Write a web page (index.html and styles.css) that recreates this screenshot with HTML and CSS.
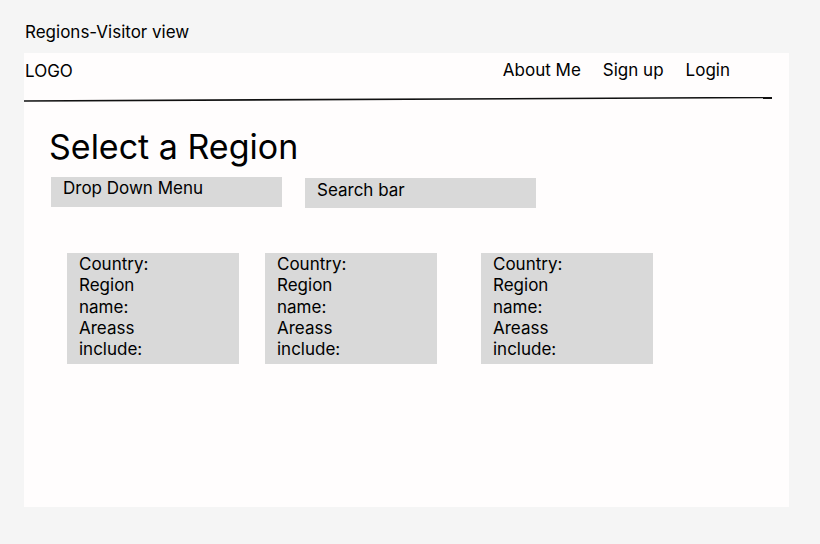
FILE: index.html
```html
<!DOCTYPE html>
<html>
<head>
<meta charset="utf-8">
<link rel="stylesheet" href="styles.css">
</head>
<body>
<div class="page-title">Regions-Visitor view</div>
<div class="frame">
  <header class="header">
    <div class="logo">LOGO</div>
    <nav class="nav">
      <span>About Me</span>
      <span>Sign up</span>
      <span>Login</span>
    </nav>
  </header>
  <svg class="rule" width="748" height="5" viewBox="0 0 748 5"><line x1="0" y1="4" x2="748" y2="0.5" stroke="#111" stroke-width="1.6"/></svg>
  <h1 class="heading">Select a Region</h1>
  <div class="controls">
    <div class="field dropdown">Drop Down Menu</div>
    <div class="field search">Search bar</div>
  </div>
  <div class="cards">
    <div class="card c1">Country:<br>Region<br>name:<br>Areass<br>include:</div>
    <div class="card c2">Country:<br>Region<br>name:<br>Areass<br>include:</div>
    <div class="card c3">Country:<br>Region<br>name:<br>Areass<br>include:</div>
  </div>
</div>
</body>
</html>
```
FILE: styles.css
```css
html, body {
  margin: 0;
  padding: 0;
}
body {
  background: #f5f5f5;
  font-family: Inter, "Liberation Sans", sans-serif;
  color: #000;
  width: 820px;
  height: 544px;
  overflow: hidden;
}
.page-title {
  font-size: 17px;
  line-height: 20px;
  padding: 22px 0 0 25px;
  height: 31px;
}
.frame {
  margin-left: 24px;
  width: 765px;
  height: 454px;
  background: #fffdfd;
}
.header {
  display: flex;
  justify-content: space-between;
  height: 44px;
}
.logo {
  font-size: 17px;
  line-height: 20px;
  padding: 8px 0 0 1px;
}
.nav {
  display: flex;
  gap: 22px;
  font-size: 17px;
  line-height: 20px;
  padding: 7px 59px 0 0;
}
.rule {
  display: block;
  margin-top: 0;
}
.heading {
  margin: 24px 0 0 25px;
  font-size: 34px;
  font-weight: 400;
  line-height: 41px;
}
.controls {
  display: flex;
  margin-top: 10px;
}
.field {
  width: 231px;
  height: 30px;
  background: #d9d9d9;
  font-size: 17px;
  line-height: 20px;
  box-sizing: border-box;
}
.dropdown {
  margin-left: 27px;
  padding: 1px 0 0 12px;
}
.search {
  margin-left: 23px;
  margin-top: 1px;
  padding: 2px 0 0 12px;
}
.cards {
  display: flex;
  margin-top: 45px;
}
.card {
  width: 172px;
  height: 111px;
  background: #d9d9d9;
  font-size: 17px;
  line-height: 21.3px;
  padding: 1px 0 0 12px;
  box-sizing: border-box;
}
.c1 { margin-left: 43px; }
.c2 { margin-left: 26px; }
.c3 { margin-left: 44px; }
```
